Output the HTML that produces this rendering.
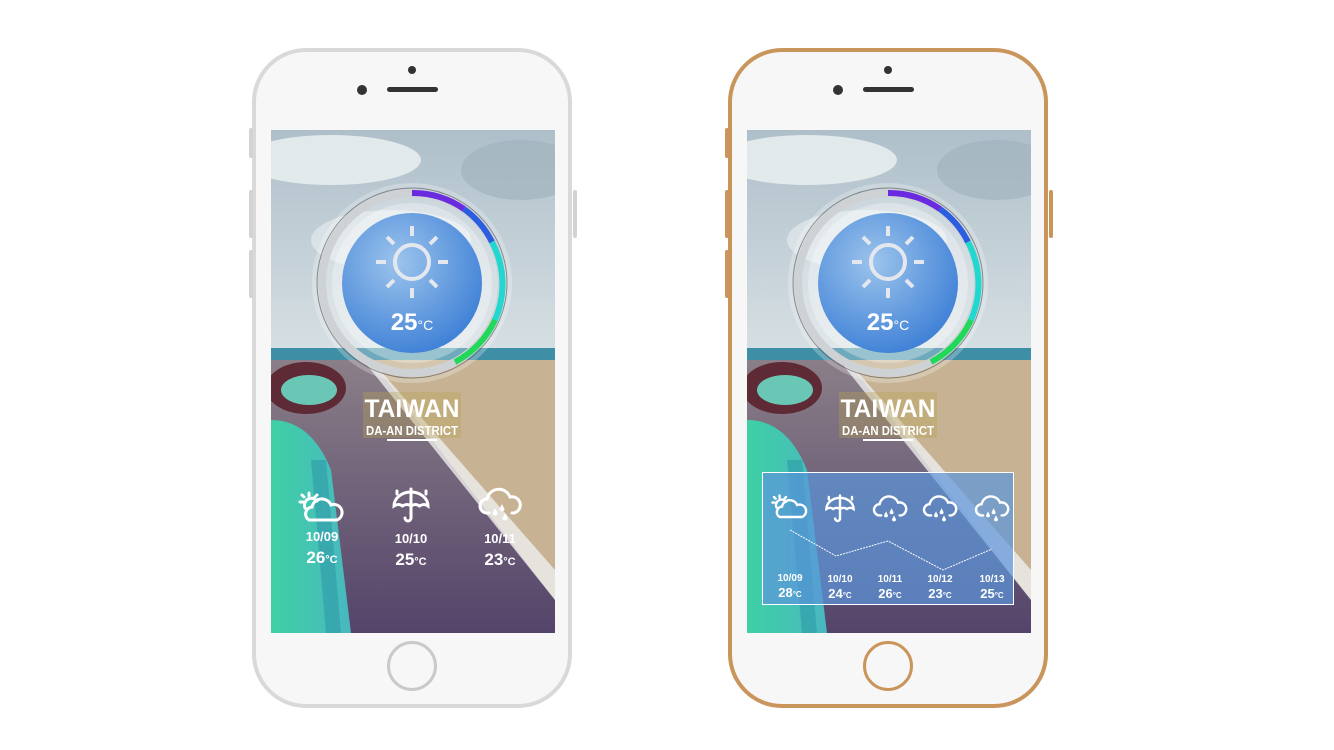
<!DOCTYPE html>
<html><head><meta charset="utf-8"><style>
html,body{margin:0;padding:0;background:#fff;width:1334px;height:750px;overflow:hidden;font-family:"Liberation Sans",sans-serif}
.ph{position:absolute;top:48px;width:312px;height:652px;border:4px solid #d8d9db;border-radius:54px;background:#f7f7f8}
.ph.g{border-color:#c9955a}
.btn{position:absolute;width:4px;background:#d2d3d5;border-radius:2px}
.scr{position:absolute;top:130px;width:284px;height:503px;overflow:hidden}
.home{position:absolute;top:641px;width:44px;height:44px;border-radius:50%;border:3px solid #c9c9cc}
</style></head><body>
<svg width="0" height="0" style="position:absolute">
<defs>
<linearGradient id="sky" x1="0" y1="0" x2="0" y2="1"><stop offset="0" stop-color="#aebfca"/><stop offset="1" stop-color="#d6dfe3"/></linearGradient>
<linearGradient id="road" x1="0" y1="0" x2="0" y2="1"><stop offset="0" stop-color="#8a7f88"/><stop offset="1" stop-color="#54446a"/></linearGradient>
<linearGradient id="car" x1="0" y1="0" x2="1" y2="0"><stop offset="0" stop-color="#3fd0a5"/><stop offset="1" stop-color="#49b8c0"/></linearGradient>
<radialGradient id="ball" cx="0.4" cy="0.35" r="0.7"><stop offset="0" stop-color="#9cc4ec"/><stop offset="1" stop-color="#3d7fd6"/></radialGradient>
<symbol id="sc" viewBox="0 0 50 40"><g fill="none" stroke="#fff" stroke-width="3" stroke-linecap="round"><path d="M12 30 a7 7 0 0 1 3-13 a10 10 0 0 1 19-2 a8 8 0 0 1 6 15 z"/><path d="M8 18 a7 7 0 0 1 12-7"/><path d="M12 3v3M3 12h3M5 5l2 2M20 5l-2 2"/></g></symbol>
<symbol id="um" viewBox="0 0 50 40"><g fill="none" stroke="#fff" stroke-width="3" stroke-linecap="round"><path d="M8 20 a17 14 0 0 1 34 0 q-4-3-8.5 0 q-4-3-8.5 0 q-4-3-8.5 0 q-4-3-8.5 0z"/><path d="M25 6v26 a3 3 0 0 1-6 0"/><path d="M25 3v2M11 5v3M40 5v3"/></g></symbol>
<symbol id="rc" viewBox="0 0 50 40"><g fill="none" stroke="#fff" stroke-width="3" stroke-linecap="round"><path d="M14 28 h-2 a7 7 0 0 1 0-14 a12 12 0 0 1 23-2 a8 8 0 0 1 4 16 h-2"/></g><g fill="#fff"><path d="M20 23 l2.5 5 a2.5 2.5 0 0 1-5 0z"/><path d="M27 19 l2.5 5 a2.5 2.5 0 0 1-5 0z"/><path d="M30 28 l2.5 5 a2.5 2.5 0 0 1-5 0z"/></g></symbol>
<g id="scene">
<rect width="284" height="220" fill="url(#sky)"/>
<ellipse cx="60" cy="30" rx="90" ry="25" fill="#eef2f3" opacity=".8"/>
<ellipse cx="120" cy="110" rx="80" ry="30" fill="#e8eef0" opacity=".6"/>
<ellipse cx="250" cy="40" rx="60" ry="30" fill="#9fb0bb" opacity=".6"/>
<rect y="218" width="284" height="12" fill="#3e8ea5"/>
<rect y="230" width="284" height="273" fill="#c7b394"/>
<path d="M60 230 L100 230 L284 470 L284 503 L0 503 L0 230z" fill="url(#road)"/>
<path d="M92 230 L100 230 L284 440 L284 470z" fill="#eee" opacity=".8"/>
<path d="M0 290 Q40 290 60 340 L80 503 L0 503z" fill="url(#car)"/>
<path d="M40 330 L55 503 L70 503 L55 330z" fill="#2f9aa8" opacity=".6"/>
<ellipse cx="35" cy="258" rx="40" ry="26" fill="#5e2a35"/>
<ellipse cx="38" cy="260" rx="28" ry="15" fill="#6bc7b5"/>
</g>
<g id="dial">
<circle cx="141" cy="153" r="100" fill="#fff" opacity=".25"/>
<circle cx="141" cy="153" r="90" fill="none" stroke="#cfd2d5" stroke-width="8"/>
<circle cx="141" cy="153" r="95" fill="none" stroke="#333" stroke-width="1" opacity=".5"/>
<path d="M141 63 A90 90 0 0 1 193 79" fill="none" stroke="#6a2ae0" stroke-width="6"/>
<path d="M193 79 A90 90 0 0 1 221 112" fill="none" stroke="#2a5de0" stroke-width="6"/>
<path d="M221 112 A90 90 0 0 1 224 190" fill="none" stroke="#20d8d0" stroke-width="6"/>
<path d="M224 190 A90 90 0 0 1 184 232" fill="none" stroke="#22d85a" stroke-width="6"/>
<circle cx="141" cy="153" r="80" fill="#fff" opacity=".3"/>
<circle cx="141" cy="153" r="70" fill="url(#ball)"/>
<g stroke="#e4e8ee" stroke-width="4" fill="none"><circle cx="141" cy="132" r="17"/><path d="M141 96v10M141 158v10M105 132h10M167 132h10M116 107l7 7M159 150l7 7M166 107l-7 7M123 150l-7 7"/></g>
<text x="141" y="200" text-anchor="middle" fill="#fff" font-weight="bold" font-size="24">25<tspan font-size="14" font-weight="normal">°C</tspan></text>
<rect x="92" y="262" width="98" height="46" fill="#b8a050" opacity=".35"/>
<text x="141" y="287" text-anchor="middle" fill="#fff" font-weight="bold" font-size="25" textLength="95" lengthAdjust="spacingAndGlyphs">TAIWAN</text>
<text x="141" y="305" text-anchor="middle" fill="#fff" font-weight="bold" font-size="13" textLength="92" lengthAdjust="spacingAndGlyphs">DA-AN DISTRICT</text>
<rect x="116" y="309" width="50" height="2" fill="#fff"/>
</g>
</defs></svg>

<div class="ph" style="left:252px"></div>
<div class="btn" style="left:249px;top:128px;height:30px"></div>
<div class="btn" style="left:249px;top:190px;height:48px"></div>
<div class="btn" style="left:249px;top:250px;height:48px"></div>
<div class="btn" style="left:573px;top:190px;height:48px"></div>
<div style="position:absolute;left:408px;top:66px;width:8px;height:8px;border-radius:50%;background:#333"></div>
<div style="position:absolute;left:357px;top:85px;width:10px;height:10px;border-radius:50%;background:#333"></div>
<div style="position:absolute;left:387px;top:87px;width:51px;height:5px;border-radius:3px;background:#333"></div>
<div class="home" style="left:387px;border-color:#c9c9cc"></div>
<svg class="scr" style="left:271px" viewBox="0 0 284 503">
<use href="#scene"/><use href="#dial"/>
<use href="#sc" x="26" y="360" width="50" height="40"/>
<use href="#um" x="115" y="356" width="50" height="40"/>
<use href="#rc" x="204" y="355" width="50" height="40"/>
<g fill="#fff" font-weight="bold" text-anchor="middle"><text x="51" y="411" font-size="13">10/09</text><text x="140" y="413" font-size="13">10/10</text><text x="229" y="413" font-size="13">10/11</text>
<text x="51" y="433" font-size="17">26<tspan font-size="11">°C</tspan></text><text x="140" y="435" font-size="17">25<tspan font-size="11">°C</tspan></text><text x="229" y="435" font-size="17">23<tspan font-size="11">°C</tspan></text></g>
</svg>

<div class="ph g" style="left:728px"></div>
<div class="btn" style="left:725px;top:128px;height:30px;background:#c9955a"></div>
<div class="btn" style="left:725px;top:190px;height:48px;background:#c9955a"></div>
<div class="btn" style="left:725px;top:250px;height:48px;background:#c9955a"></div>
<div class="btn" style="left:1049px;top:190px;height:48px;background:#c9955a"></div>
<div style="position:absolute;left:884px;top:66px;width:8px;height:8px;border-radius:50%;background:#333"></div>
<div style="position:absolute;left:833px;top:85px;width:10px;height:10px;border-radius:50%;background:#333"></div>
<div style="position:absolute;left:863px;top:87px;width:51px;height:5px;border-radius:3px;background:#333"></div>
<div class="home" style="left:863px;border-color:#c9955a"></div>
<svg class="scr" style="left:747px" viewBox="0 0 284 503">
<use href="#scene"/><use href="#dial"/>
<rect x="15.5" y="342.5" width="251" height="132" fill="#5b95dc" fill-opacity=".7" stroke="#fff"/>
<use href="#sc" x="23" y="363" width="40" height="32"/>
<use href="#um" x="73" y="363" width="40" height="32"/>
<use href="#rc" x="123" y="363" width="40" height="32"/>
<use href="#rc" x="173" y="363" width="40" height="32"/>
<use href="#rc" x="225" y="363" width="40" height="32"/>
<polyline points="43,400 89,426 141,411 196,440 245,419" fill="none" stroke="#fff" stroke-dasharray="2 1"/>
<g fill="#fff" font-weight="bold" text-anchor="middle"><text x="43" y="451" font-size="10">10/09</text><text x="93" y="452" font-size="10">10/10</text><text x="143" y="452" font-size="10">10/11</text><text x="193" y="452" font-size="10">10/12</text><text x="245" y="452" font-size="10">10/13</text>
<text x="43" y="467" font-size="13">28<tspan font-size="8">°C</tspan></text><text x="93" y="468" font-size="13">24<tspan font-size="8">°C</tspan></text><text x="143" y="468" font-size="13">26<tspan font-size="8">°C</tspan></text><text x="193" y="468" font-size="13">23<tspan font-size="8">°C</tspan></text><text x="245" y="468" font-size="13">25<tspan font-size="8">°C</tspan></text></g>
</svg>
</body></html>
